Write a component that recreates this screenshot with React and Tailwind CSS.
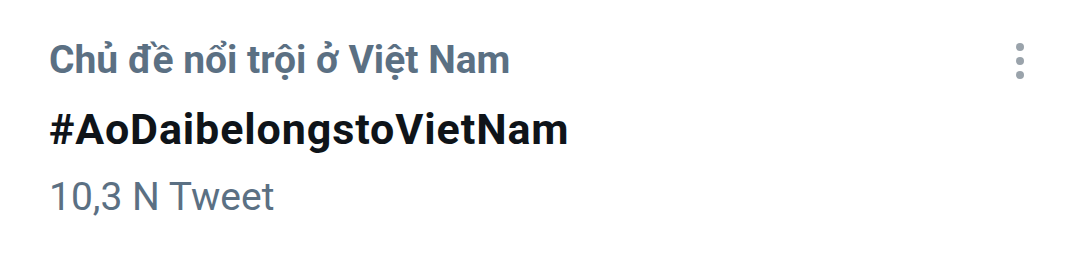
export default function App() {
  return (
    <div className="w-[1080px] h-[267px] bg-white flex justify-between" style={{ fontFamily: "Roboto, sans-serif" }}>
      <div className="pl-[49px] pt-[37px] flex flex-col">
        <div className="text-[39px] leading-[46px] font-bold text-[#5b7083] whitespace-nowrap">Chủ đề nổi trội ở Việt Nam</div>
        <div className="text-[43px] leading-[48px] font-bold text-[#0f1419] tracking-[0.9px] mt-[22px] whitespace-nowrap">#AoDaibelongstoVietNam</div>
        <div className="text-[39px] leading-[46px] text-[#5b7083] mt-[21px] whitespace-nowrap">10,3 N Tweet</div>
      </div>
      <div className="pr-[56px] pt-[43px] flex flex-col gap-[6px]">
        <div className="w-[8px] h-[8px] rounded-full bg-[#9aa3ab]" />
        <div className="w-[8px] h-[8px] rounded-full bg-[#9aa3ab]" />
        <div className="w-[8px] h-[8px] rounded-full bg-[#9aa3ab]" />
      </div>
    </div>
  );
}
